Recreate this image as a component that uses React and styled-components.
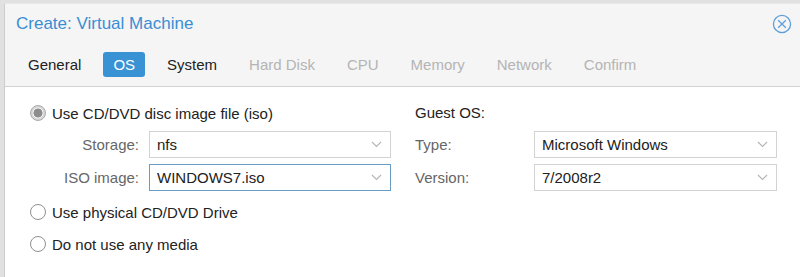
import styled, { createGlobalStyle } from 'styled-components'

const GlobalStyle = createGlobalStyle`
    html, body {
        margin: 0;
        padding: 0;
        background: #e1e1e1;
        font-family: "Liberation Sans", Arial, sans-serif;
    }
`

const tabs = [
    { label: 'General' },
    { label: 'OS', active: true },
    { label: 'System' },
    { label: 'Hard Disk', disabled: true },
    { label: 'CPU', disabled: true },
    { label: 'Memory', disabled: true },
    { label: 'Network', disabled: true },
    { label: 'Confirm', disabled: true },
]

function Chevron() {
    return (
        <svg width="11" height="7" viewBox="0 0 11 7">
            <path d="M1 1 L5.5 5.5 L10 1" fill="none" stroke="#b4b4b4" strokeWidth="1.1" />
        </svg>
    )
}

function CloseIcon() {
    return (
        <svg width="20" height="20" viewBox="0 0 20 20">
            <circle cx="10" cy="10" r="8.6" fill="none" stroke="#5e9fd8" strokeWidth="1.3" />
            <path d="M6.2 6.2 L13.8 13.8 M13.8 6.2 L6.2 13.8" stroke="#5e9fd8" strokeWidth="1.3" />
        </svg>
    )
}

function Field({ label, value, focused, align }) {
    return (
        <FieldRow>
            <FieldLabel $align={align}>{label}</FieldLabel>
            <Select $focused={focused}>
                <span>{value}</span>
                <Chevron />
            </Select>
        </FieldRow>
    )
}

export default function App() {
    return (
        <Page>
            <GlobalStyle />
            <Window>
                <Header>
                    <TitleBar>
                        <Title>Create: Virtual Machine</Title>
                        <CloseIcon />
                    </TitleBar>
                    <TabBar>
                        {tabs.map((t) => (
                            <Tab key={t.label} $active={t.active} $disabled={t.disabled}>
                                {t.label}
                            </Tab>
                        ))}
                    </TabBar>
                </Header>

                <Body>
                    <Column>
                        <RadioRow>
                            <Radio $checked />
                            Use CD/DVD disc image file (iso)
                        </RadioRow>
                        <Field label="Storage:" value="nfs" align="right" />
                        <Field label="ISO image:" value="WINDOWS7.iso" align="right" focused />
                        <RadioRow $spaced>
                            <Radio />
                            Use physical CD/DVD Drive
                        </RadioRow>
                        <RadioRow $spaced>
                            <Radio />
                            Do not use any media
                        </RadioRow>
                    </Column>

                    <Column>
                        <Heading>Guest OS:</Heading>
                        <Field label="Type:" value="Microsoft Windows" />
                        <Field label="Version:" value="7/2008r2" />
                    </Column>
                </Body>
            </Window>
        </Page>
    )
}

const Page = styled.div`
    padding: 3px 0 0 4px;
    height: 277px;
    box-sizing: border-box;
    overflow: hidden;
`

const Window = styled.div`
    height: 100%;
    background: #fff;
    border-left: 1px solid #cdcdcd;
    border-top: 1px solid #e8e8e8;
    display: flex;
    flex-direction: column;
`

const Header = styled.div`
    background: #f5f5f5;
    border-bottom: 1px solid #d2d2d2;
    padding: 10px 0 9px;
`

const TitleBar = styled.div`
    display: flex;
    align-items: center;
    justify-content: space-between;
    height: 20px;
    padding: 0 8px 0 11px;
`

const Title = styled.div`
    font-size: 17px;
    color: #3a8ed4;
`

const TabBar = styled.div`
    display: flex;
    gap: 12px;
    margin-top: 18px;
    padding-left: 13px;
`

const Tab = styled.div`
    font-size: 15px;
    line-height: 25px;
    padding: 0 10px;
    border-radius: 3px;
    color: ${(p) => (p.$active ? '#fff' : p.$disabled ? '#b4b4b4' : '#222')};
    background: ${(p) => (p.$active ? '#3892d4' : 'transparent')};
`

const Body = styled.div`
    flex: 1;
    display: grid;
    grid-template-columns: 361px 362px;
    column-gap: 24px;
    align-items: start;
    padding: 15px 0 0 25px;
    font-size: 15px;
    color: #222;
`

const Column = styled.div`
    display: flex;
    flex-direction: column;
`

const RadioRow = styled.div`
    display: flex;
    align-items: center;
    gap: 6px;
    height: 22px;
    margin-top: ${(p) => (p.$spaced ? '10px' : '0')};
`

const Radio = styled.span`
    width: 16px;
    height: 16px;
    box-sizing: border-box;
    border-radius: 50%;
    border: 1px solid ${(p) => (p.$checked ? '#ababab' : '#8f8f8f')};
    background: ${(p) =>
        p.$checked
            ? 'radial-gradient(circle, #8d8d8d 0 4.2px, #f2f2f2 4.8px 5.2px, #d6d6d6 5.7px)'
            : '#fff'};
    flex-shrink: 0;
`

const Heading = styled.div`
    height: 22px;
    line-height: 22px;
`

const FieldRow = styled.div`
    display: flex;
    align-items: center;
    gap: 10px;
    height: 27px;
    margin-top: 7px;
    & + & {
        margin-top: 6px;
    }
`

const FieldLabel = styled.div`
    width: 109px;
    flex-shrink: 0;
    text-align: ${(p) => (p.$align === 'right' ? 'right' : 'left')};
    color: #666;
`

const Select = styled.div`
    flex: 1;
    height: 27px;
    box-sizing: border-box;
    border: 1px solid ${(p) => (p.$focused ? '#6a9cc4' : '#d3d3d3')};
    background: #fff;
    display: flex;
    align-items: center;
    justify-content: space-between;
    padding: 0 8px 0 7px;
    color: #222;
`
